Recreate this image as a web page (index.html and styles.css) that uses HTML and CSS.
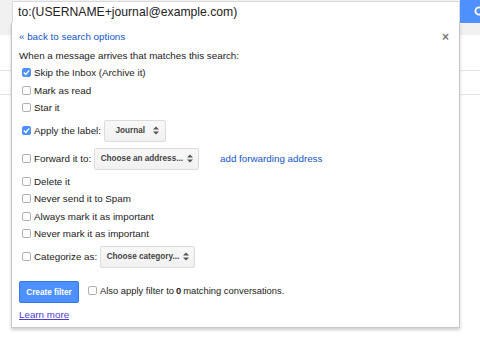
FILE: index.html
```html
<!DOCTYPE html>
<html lang="en">
<head>
    <meta charset="UTF-8" />
    <meta name="viewport" content="width=device-width, initial-scale=1.0" />
    <title>Create filter</title>
    <link rel="stylesheet" href="styles.css">
</head>
<body>

    <header class="topbar">
        <div class="search-row">
            <div class="search-box">to:(USERNAME+journal@example.com)</div>
            <button class="search-btn">
                <svg width="12" height="12" viewBox="0 0 12 12"><circle cx="5" cy="5" r="3.6" fill="none" stroke="#fff" stroke-width="1.8"/><path d="M7.6 7.6 L11 11" stroke="#fff" stroke-width="1.8"/></svg>
            </button>
        </div>
    </header>

    <div class="list">
        <div class="list-head"></div>
        <div class="list-row"></div>
    </div>

    <div class="filter-panel">
        <div class="panel-top">
            <a href="#" class="link">« back to search options</a>
            <span class="close">×</span>
        </div>
        <div class="intro">When a message arrives that matches this search:</div>

        <label class="opt"><span class="cb on"><svg width="9" height="9" viewBox="0 0 9 9"><path d="M1.8 4.6 L3.7 6.4 L7.3 2.4" fill="none" stroke="#fff" stroke-width="1.4"/></svg></span>Skip the Inbox (Archive it)</label>
        <label class="opt"><span class="cb"></span>Mark as read</label>
        <label class="opt"><span class="cb"></span>Star it</label>

        <div class="opt tall">
            <span class="cb on"><svg width="9" height="9" viewBox="0 0 9 9"><path d="M1.8 4.6 L3.7 6.4 L7.3 2.4" fill="none" stroke="#fff" stroke-width="1.4"/></svg></span>Apply the label:
            <span class="select wide">Journal<svg class="arrows" width="6" height="9" viewBox="0 0 6 9"><path d="M0 3.6 L3 0.4 L6 3.6Z M0 5.4 L3 8.6 L6 5.4Z" fill="#555"/></svg></span>
        </div>

        <div class="opt tall">
            <span class="cb"></span>Forward it to:
            <span class="select">Choose an address...<svg class="arrows" width="6" height="9" viewBox="0 0 6 9"><path d="M0 3.6 L3 0.4 L6 3.6Z M0 5.4 L3 8.6 L6 5.4Z" fill="#555"/></svg></span>
            <a href="#" class="link fwd">add forwarding address</a>
        </div>

        <label class="opt"><span class="cb"></span>Delete it</label>
        <label class="opt"><span class="cb"></span>Never send it to Spam</label>
        <label class="opt"><span class="cb"></span>Always mark it as important</label>
        <label class="opt"><span class="cb"></span>Never mark it as important</label>

        <div class="opt tall">
            <span class="cb"></span>Categorize as:
            <span class="select">Choose category...<svg class="arrows" width="6" height="9" viewBox="0 0 6 9"><path d="M0 3.6 L3 0.4 L6 3.6Z M0 5.4 L3 8.6 L6 5.4Z" fill="#555"/></svg></span>
        </div>

        <div class="actions">
            <button class="create-btn">Create filter</button>
            <label class="opt also"><span class="cb"></span>Also apply filter to <b>0</b> matching conversations.</label>
        </div>

        <a href="#" class="learn">Learn more</a>
    </div>

</body>
</html>
```

FILE: styles.css
```css
:root {
    --blue: #4d90fe;
    --blue-border: #3079ed;
    --link: #15c;
    --text: #222;
    --line: #e5e5e5;
}

* {
    box-sizing: border-box;
}

body {
    font-family: 'Liberation Sans', Arial, sans-serif;
    font-size: 9.8px;
    color: var(--text);
    background: #fff;
    margin: 0;
    padding: 0;
    width: 480px;
    height: 346px;
    overflow: hidden;
    position: relative;
}

.topbar {
    background: #f1f1f1;
    height: 35px;
}

.search-row {
    display: flex;
    height: 23px;
    padding-left: 12px;
}

.search-box {
    flex: 1;
    margin-top: 1px;
    background: #fff;
    border: 1px solid #d9d9d9;
    border-bottom: none;
    padding-left: 5px;
    font-size: 12.2px;
    line-height: 21px;
    white-space: nowrap;
}

.search-btn {
    width: 20px;
    height: 23px;
    background: var(--blue);
    border: none;
    padding: 0 0 0 14px;
    display: flex;
    align-items: center;
    overflow: hidden;
}

    .search-btn svg {
        flex: none;
    }

.list-head {
    height: 36px;
    border-bottom: 1px solid var(--line);
}

.list-row {
    height: 24px;
    border-bottom: 1px solid var(--line);
}

/* dropdown over the mail list */
.filter-panel {
    position: absolute;
    left: 11px;
    top: 23px;
    width: 449px;
    background: #fff;
    border: 1px solid #c8c8c8;
    border-top: none;
    box-shadow: 0 2px 3px rgba(0,0,0,0.2);
    padding: 5px 10px 4px 7px;
}

.panel-top {
    display: flex;
    justify-content: space-between;
    align-items: center;
    height: 17px;
}

.link {
    color: var(--link);
    text-decoration: none;
}

.close {
    color: #777;
    font-size: 12px;
    font-weight: bold;
    line-height: 1;
}

.intro {
    margin-top: 2px;
    line-height: 17px;
}

.opt {
    display: flex;
    align-items: center;
    height: 17.5px;
    white-space: nowrap;
}

    .opt.tall {
        height: 28px;
    }

.cb {
    width: 9px;
    height: 9px;
    margin: 0 3px;
    border: 1px solid #b0b0b0;
    border-radius: 2px;
    background: #fff;
    display: inline-flex;
    align-items: center;
    justify-content: center;
    flex: none;
}

    .cb.on {
        background: var(--blue);
        border-color: var(--blue);
    }

    .cb svg {
        flex: none;
    }

.select {
    display: inline-flex;
    align-items: center;
    height: 22px;
    margin-left: 3px;
    padding: 0 5px 0 5.5px;
    border: 1px solid #dcdcdc;
    border-radius: 2px;
    background: linear-gradient(#f8f8f8, #f1f1f1);
    color: #444;
    font-size: 8.2px;
    font-weight: bold;
}

    .select.wide {
        padding-left: 10.5px;
        padding-right: 6px;
    }

.arrows {
    margin-left: 4px;
    flex: none;
}

.select.wide .arrows {
    margin-left: 8px;
}

.fwd {
    margin-left: 21px;
}

.actions {
    display: flex;
    align-items: center;
    margin-top: 10.5px;
}

.create-btn {
    width: 60px;
    height: 22px;
    background: var(--blue);
    border: 1px solid var(--blue-border);
    border-radius: 2px;
    color: #fff;
    font-family: inherit;
    font-size: 8.2px;
    font-weight: bold;
    padding: 0;
}

.also {
    margin-left: 6px;
    margin-top: -3px;
    font-size: 9.4px;
}

    .also b {
        font-weight: bold;
        margin: 0 2px;
    }

.learn {
    display: block;
    margin-top: 3px;
    line-height: 17px;
    color: #4a3ccf;
    text-decoration: underline;
    width: max-content;
}
```
